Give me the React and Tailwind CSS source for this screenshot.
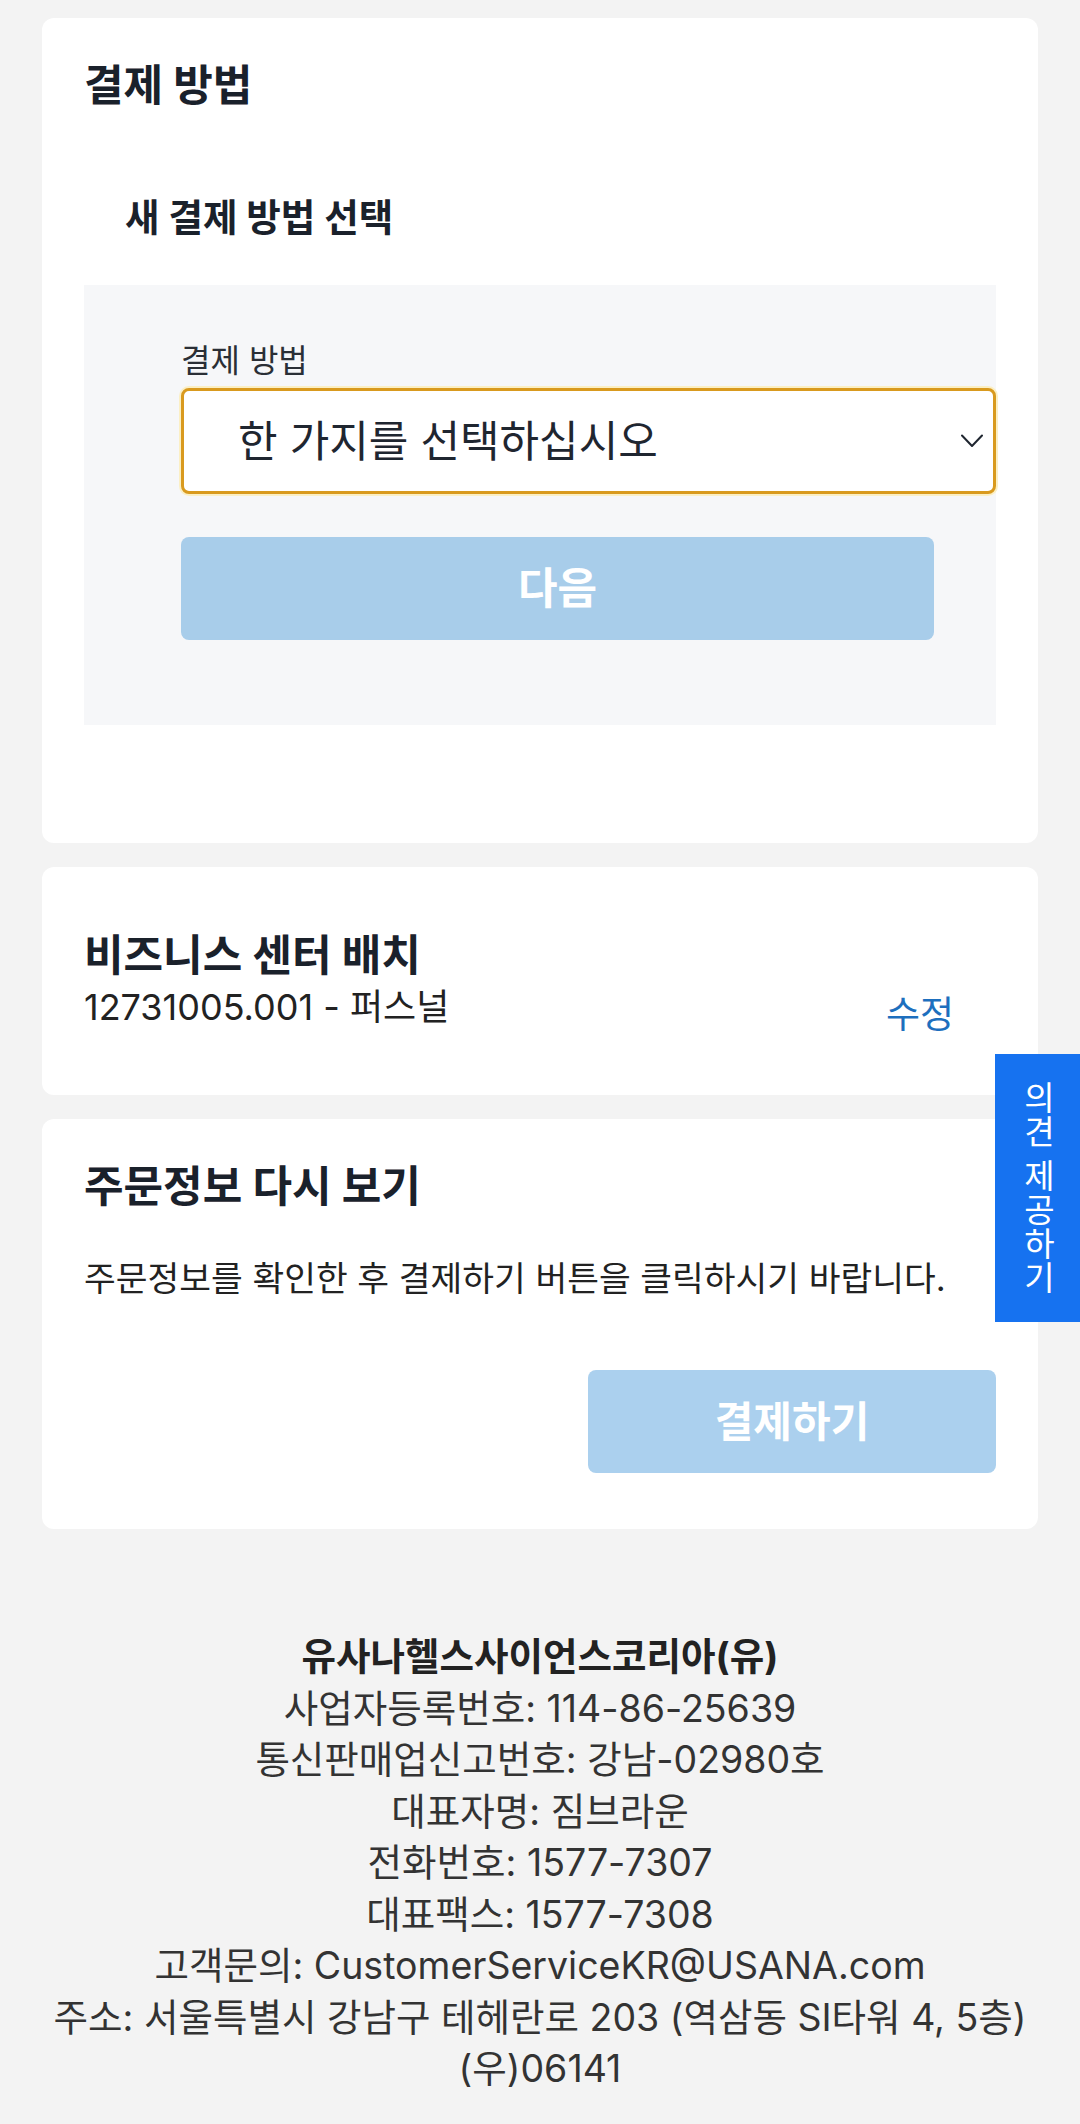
import React from 'react';

const font = { fontFamily: 'Inter, "Noto Sans CJK KR", sans-serif' };

function Chevron() {
    return (
        <svg width="22" height="14" viewBox="0 0 22 14" fill="none" className="pointer-events-none absolute right-[13px] top-1/2 -translate-y-1/2">
            <path d="M1 1.5 L11 12 L21 1.5" stroke="#1f2630" strokeWidth="2" strokeLinecap="round" strokeLinejoin="round" />
        </svg>
    );
}

export default function App() {
    const footer = [
        '사업자등록번호: 114-86-25639',
        '통신판매업신고번호: 강남-02980호',
        '대표자명: 짐브라운',
        '전화번호: 1577-7307',
        '대표팩스: 1577-7308',
        '고객문의: CustomerServiceKR@USANA.com',
        '주소: 서울특별시 강남구 테헤란로 203 (역삼동 SI타워 4, 5층)',
        '(우)06141',
    ];

    return (
        <div className="relative min-h-screen bg-[#f3f3f3] pt-[18px]" style={font}>
            <div className="px-[42px] flex flex-col gap-[24px]">
                {/* Payment method */}
                <section className="bg-white rounded-xl px-[42px] pt-[43px] pb-[118px]">
                    <h2 className="text-[43px] leading-[48px] font-bold text-[#1a212b]">결제 방법</h2>
                    <h3 className="mt-[89px] pl-[41px] text-[37.5px] leading-[40px] font-bold text-[#1a212b]">새 결제 방법 선택</h3>
                    <div className="mt-[47px] bg-[#f6f7f9] pl-[97px] pt-[58px] pb-[85px]">
                        <label className="block text-[32px] leading-[36px] text-[#2a2f36]">결제 방법</label>
                        <div className="relative mt-[9px]">
                            <select className="w-full h-[106px] appearance-none bg-white border-[3px] border-[#d99a1e] rounded-lg pl-[54px] text-[43px] text-[#1f2630] outline-none ring-2 ring-[#fbefc4]" style={font}>
                                <option>한 가지를 선택하십시오</option>
                            </select>
                            <Chevron />
                        </div>
                        <button className="mt-[43px] mr-[62px] w-[calc(100%-62px)] h-[103px] rounded-lg bg-[#a8cdea] text-white text-[43px] font-bold">다음</button>
                    </div>
                </section>

                {/* Business center */}
                <section className="bg-white rounded-xl px-[42px] pt-[64px] pb-[60px]">
                    <h2 className="text-[43px] leading-[48px] font-bold text-[#1a212b]">비즈니스 센터 배치</h2>
                    <div className="mt-[8px] flex items-start justify-between">
                        <p className="text-[36px] leading-[40px] text-[#222]">12731005.001 - 퍼스널</p>
                        <a className="mt-[8px] mr-[42px] text-[37px] leading-[40px] text-[#1d6fbe]">수정</a>
                    </div>
                </section>

                {/* Order review */}
                <section className="bg-white rounded-xl px-[42px] pt-[43px] pb-[56px] flex flex-col">
                    <h2 className="text-[43px] leading-[48px] font-bold text-[#1a212b]">주문정보 다시 보기</h2>
                    <p className="mt-[49px] text-[34.5px] leading-[40px] text-[#222] whitespace-nowrap">주문정보를 확인한 후 결제하기 버튼을 클릭하시기 바랍니다.</p>
                    <button className="mt-[71px] self-end w-[408px] h-[103px] rounded-lg bg-[#abd0ee] text-white text-[42px] font-bold">결제하기</button>
                </section>
            </div>

            <footer className="pt-[102px] pb-[30px] text-center text-[37.5px] leading-[51.5px] text-[#333]">
                <p className="font-bold text-[#222]">유사나헬스사이언스코리아(유)</p>
                {footer.map((line) => (
                    <p key={line}>{line}</p>
                ))}
            </footer>

            {/* Feedback tab */}
            <div className="absolute right-0 top-[1054px] w-[85px] h-[268px] bg-[#1672f0] flex items-center justify-center">
                <span className="[writing-mode:vertical-rl] text-white text-[33px] leading-[40px] tracking-[1px]">의견 제공하기</span>
            </div>
        </div>
    );
}
